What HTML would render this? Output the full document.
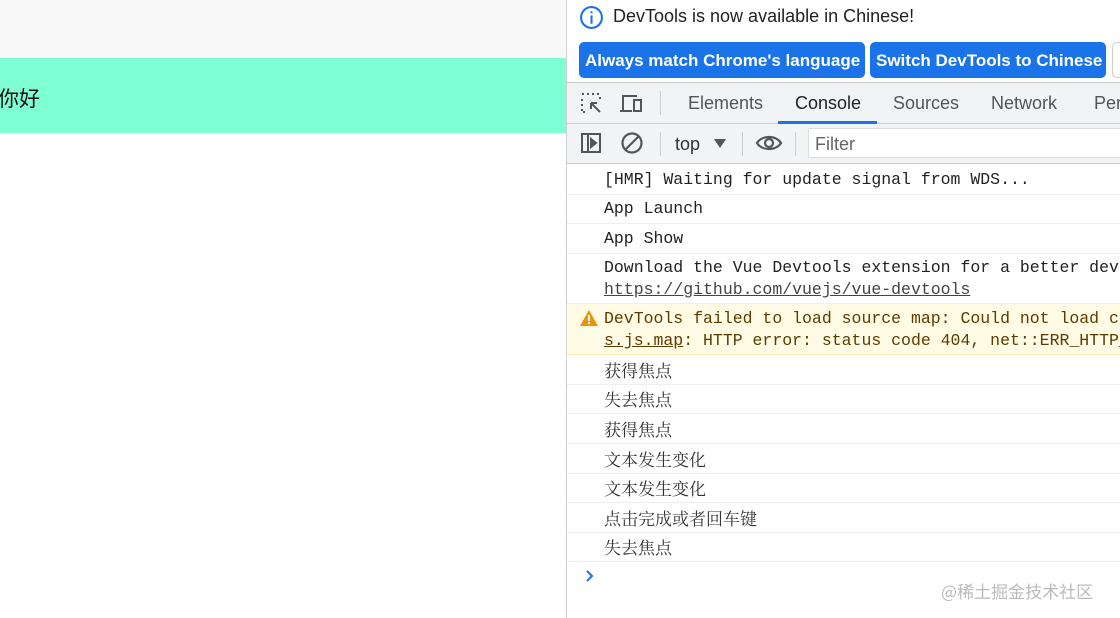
<!DOCTYPE html><html><head><meta charset="utf-8"><style>
*{margin:0;padding:0;box-sizing:border-box}
body{width:1120px;height:618px;overflow:hidden;background:#fff;position:relative;font-family:"Liberation Sans","Noto Sans CJK SC",sans-serif}
.left{position:absolute;left:0;top:0;width:566px;height:618px}
.dt{position:absolute;left:566px;top:0;width:554px;height:618px;border-left:1px solid #d0d0d0;background:#fff}
.abs{position:absolute;white-space:nowrap}
.btn{position:absolute;top:42px;height:36px;background:#1a73e8;color:#fff;font-weight:bold;font-size:17px;border-radius:5px;line-height:37px;padding-left:6px;white-space:nowrap;overflow:hidden}
.row{position:absolute;left:0;width:554px;border-bottom:1px solid #eee;font-family:"Liberation Mono","Noto Sans CJK SC",monospace;font-size:16.5px;color:#222;padding-left:37px;white-space:nowrap;overflow:hidden}
.cn{font-family:"Noto Serif CJK SC","Noto Sans CJK SC",serif;font-size:17px;color:#333}
</style></head><body>
<div class="left">
<div class="abs" style="left:0;top:0;width:566px;height:58px;background:#f8f8f8"></div>
<div class="abs" style="left:0;top:58px;width:566px;height:75px;background:#7fffd4"></div>
<div class="abs" style="left:-2px;top:83px;font-size:21px;color:#111;font-family:'Noto Sans CJK SC',sans-serif">你好</div>
</div>
<div class="dt">
<svg class="abs" style="left:12px;top:5px" width="25" height="25" viewBox="0 0 24 24"><circle cx="12" cy="12" r="10" fill="none" stroke="#1a73e8" stroke-width="2"/><rect x="11" y="10" width="2" height="8" fill="#1a73e8"/><rect x="11" y="6" width="2" height="2" fill="#1a73e8"/></svg>
<div class="abs" style="left:46px;top:6px;font-size:18px;color:#222">DevTools is now available in Chinese!</div>
<div class="btn" style="left:12px;width:286px">Always match Chrome's language</div>
<div class="btn" style="left:303px;width:236px">Switch DevTools to Chinese</div>
<div class="abs" style="left:545px;top:42px;width:20px;height:36px;border:1px solid #ccc;border-radius:5px"></div>
<div class="abs" style="left:0;top:82px;width:554px;height:42px;background:#f1f3f4;border-top:1px solid #ccc;border-bottom:1px solid #ccc"></div>
<svg class="abs" style="left:13px;top:92px" width="24" height="24" viewBox="0 0 24 24" fill="none" stroke="#555" stroke-width="2"><path d="M2 2h2M7 2h2M12 2h2M17 2h3M2 7v2M2 12v2M2 17v3h3M20 5v3" stroke-dasharray="2 2"/><path d="M11 11l9 9M11 11h6M11 11v6"/></svg>
<svg class="abs" style="left:52px;top:92px" width="26" height="24" viewBox="0 0 26 24" fill="none" stroke="#555" stroke-width="2"><path d="M4 18V4h14M1 19h12"/><rect x="15" y="8" width="7" height="11"/></svg>
<div class="abs" style="left:93px;top:91px;width:1px;height:24px;background:#ccc"></div>
<div class="abs" style="left:121px;top:93px;font-size:18px;color:#555">Elements</div>
<div class="abs" style="left:228px;top:93px;font-size:18px;color:#222">Console</div>
<div class="abs" style="left:211px;top:121px;width:99px;height:3px;background:#1a73e8"></div>
<div class="abs" style="left:326px;top:93px;font-size:18px;color:#555">Sources</div>
<div class="abs" style="left:424px;top:93px;font-size:18px;color:#555">Network</div>
<div class="abs" style="left:527px;top:93px;font-size:18px;color:#555">Per</div>
<div class="abs" style="left:0;top:124px;width:554px;height:40px;background:#f1f3f4;border-bottom:1px solid #ccc"></div>
<svg class="abs" style="left:13px;top:132px" width="22" height="22" viewBox="0 0 22 22" fill="none" stroke="#555" stroke-width="2"><rect x="2" y="2" width="18" height="18"/><path d="M8 2v18"/><path d="M11 7l5 4-5 4z" fill="#555"/></svg>
<svg class="abs" style="left:54px;top:132px" width="22" height="22" viewBox="0 0 22 22" fill="none" stroke="#555" stroke-width="2.2"><circle cx="11" cy="11" r="9.5"/><path d="M4.5 17.5l13-13"/></svg>
<div class="abs" style="left:93px;top:132px;width:1px;height:24px;background:#ccc"></div>
<div class="abs" style="left:108px;top:134px;font-size:18px;color:#333">top</div>
<svg class="abs" style="left:146px;top:138px" width="14" height="12"><path d="M1 1h12l-6 9z" fill="#555"/></svg>
<div class="abs" style="left:175px;top:132px;width:1px;height:24px;background:#ccc"></div>
<svg class="abs" style="left:188px;top:132px" width="28" height="22" viewBox="0 0 28 22" fill="none" stroke="#555" stroke-width="2.2"><path d="M2 11C7 3 21 3 26 11C21 19 7 19 2 11z"/><circle cx="14" cy="11" r="4"/></svg>
<div class="abs" style="left:228px;top:132px;width:1px;height:24px;background:#ccc"></div>
<div class="abs" style="left:241px;top:128px;width:320px;height:30px;background:#fff;border:1px solid #ddd;border-radius:2px"></div>
<div class="abs" style="left:248px;top:134px;font-size:18px;color:#666">Filter</div>
<div class="row" style="top:165px;height:30px;line-height:30px">[HMR] Waiting for update signal from WDS...</div>
<div class="row" style="top:195px;height:29px;line-height:28px">App Launch</div>
<div class="row" style="top:224px;height:30px;line-height:30px">App Show</div>
<div class="row" style="top:254px;height:50px;line-height:22px;padding-top:3px">Download the Vue Devtools extension for a better deve<br><span style="text-decoration:underline;color:#444">https://github.com/vuejs/vue-devtools</span></div>
<div class="row" style="top:304px;height:51px;line-height:22px;padding-top:4px;background:#fffbe5;border-color:#fff0b0;color:#5c3c00">DevTools failed to load source map: Could not load co<br><span style="text-decoration:underline">s.js.map</span>: HTTP error: status code 404, net::ERR_HTTP_</div>
<svg class="abs" style="left:13px;top:310px" width="18" height="16" viewBox="0 0 18 16"><path d="M9 0L18 16H0z" fill="#e8950c"/><rect x="8" y="5" width="2" height="6" fill="#fff"/><rect x="8" y="12" width="2" height="2" fill="#fff"/></svg>
<div class="row cn" style="top:355px;height:30px;line-height:30px">获得焦点</div>
<div class="row cn" style="top:385px;height:29px;line-height:28px">失去焦点</div>
<div class="row cn" style="top:414px;height:30px;line-height:30px">获得焦点</div>
<div class="row cn" style="top:444px;height:30px;line-height:30px">文本发生变化</div>
<div class="row cn" style="top:474px;height:29px;line-height:28px">文本发生变化</div>
<div class="row cn" style="top:503px;height:30px;line-height:30px">点击完成或者回车键</div>
<div class="row cn" style="top:533px;height:29px;line-height:28px">失去焦点</div>
<svg class="abs" style="left:18px;top:569px" width="10" height="14"><path d="M2 2l5 5-5 5" fill="none" stroke="#1a73e8" stroke-width="2"/></svg>
<div class="abs" style="left:374px;top:578px;font-size:17px;color:#bbb;font-family:'Noto Sans CJK SC',sans-serif">@稀土掘金技术社区</div>
</div>
</body></html>
